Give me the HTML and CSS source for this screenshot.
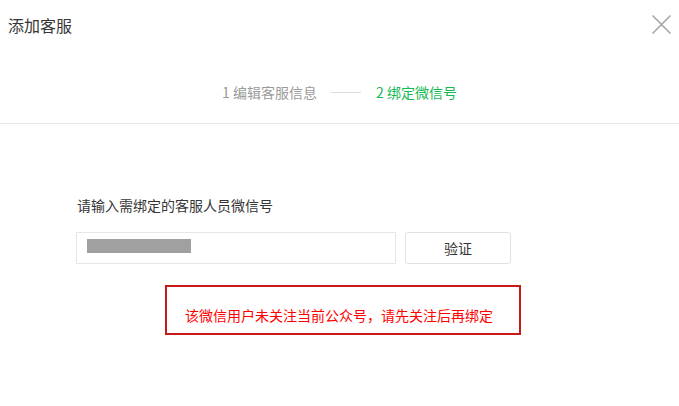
FILE: index.html
```html
<!DOCTYPE html>
<html lang="zh-CN">
<head>
<meta charset="utf-8">
<title>添加客服</title>
<link rel="stylesheet" href="styles.css">
</head>
<body>
<div class="dialog">
  <div class="dialog-hd">
    <h3 class="dialog-title">添加客服</h3>
    <button class="dialog-close" aria-label="关闭">
      <svg width="19" height="19" viewBox="0 0 19 19"><path d="M0.5 0.5L18.5 18.5M18.5 0.5L0.5 18.5" stroke="#a3a3a3" stroke-width="1.5" fill="none"/></svg>
    </button>
  </div>
  <div class="steps">
    <span class="step">1 编辑客服信息</span>
    <span class="step-line"></span>
    <span class="step step-current">2 绑定微信号</span>
  </div>
  <div class="dialog-bd">
    <p class="field-label">请输入需绑定的客服人员微信号</p>
    <div class="field-row">
      <div class="text-input"><span class="redacted"></span></div>
      <button class="btn">验证</button>
    </div>
    <div class="error-box">该微信用户未关注当前公众号，请先关注后再绑定</div>
  </div>
</div>
</body>
</html>
```

FILE: styles.css
```css
html, body {
  margin: 0;
  padding: 0;
  background: #fff;
}
body {
  font-family: "Noto Sans CJK SC", "Microsoft YaHei", sans-serif;
  color: #353535;
  width: 679px;
  height: 406px;
  overflow: hidden;
}
.dialog-hd {
  height: 50px;
  display: flex;
  justify-content: space-between;
  align-items: flex-start;
  padding: 0 8px;
}
.dialog-title {
  margin: 0;
  padding-top: 13px;
  font-size: 16px;
  font-weight: normal;
  line-height: 24px;
  color: #353535;
}
.dialog-close {
  margin-top: 15px;
  padding: 0;
  border: 0;
  background: none;
  width: 19px;
  height: 19px;
  display: block;
}
.dialog-close svg { display: block; }
.steps {
  height: 62px;
  padding-top: 11px;
  border-bottom: 1px solid #e7e7eb;
  display: flex;
  align-items: center;
  justify-content: center;
  gap: 14px;
  font-size: 14px;
  line-height: 20px;
}
.step { color: #9a9a9a; }
.step-current { color: #17b955; }
.step-line {
  width: 30px;
  height: 1px;
  background: #d9dce0;
  margin-right: 1px;
}
.dialog-bd {
  padding-left: 76px;
}
.field-label {
  margin: 71px 0 17px;
  padding-left: 1px;
  font-size: 14px;
  line-height: 20px;
  color: #353535;
}
.field-row {
  display: flex;
  gap: 9px;
}
.text-input {
  box-sizing: border-box;
  width: 320px;
  height: 32px;
  border: 1px solid #e7e7eb;
  padding: 6px 0 0 10px;
}
.redacted {
  display: block;
  width: 104px;
  height: 14px;
  background: #a0a0a0;
}
.btn {
  box-sizing: border-box;
  width: 106px;
  height: 32px;
  border: 1px solid #e2e2e2;
  border-radius: 3px;
  background: #fff;
  font-family: inherit;
  font-size: 14px;
  color: #353535;
  padding: 0;
}
.error-box {
  box-sizing: border-box;
  margin: 21px 0 0 89px;
  width: 356px;
  height: 50px;
  border: 2px solid #c81818;
  padding: 18px 0 0 18px;
  font-size: 14px;
  line-height: 21px;
  color: #f00;
}
```
